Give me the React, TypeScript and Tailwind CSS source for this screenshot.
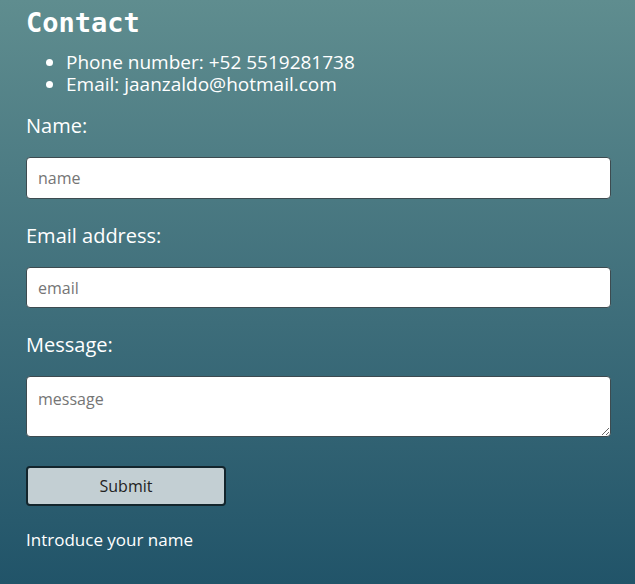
export default function App() {
  return (
    <div
      className="min-h-[584px] w-full bg-gradient-to-b from-[#5f8d8f] to-[#215469] text-white px-[26px] pt-[6px] pb-[30px]"
      style={{ fontFamily: '"Open Sans", "Noto Sans", sans-serif' }}
    >
      <h1
        className="text-[27px] font-bold leading-[34px]"
        style={{ fontFamily: '"DejaVu Sans Mono", "Liberation Mono", monospace' }}
      >
        Contact
      </h1>

      <ul className="list-disc pl-[40px] text-[19px] leading-[22px] mt-[11px]">
        <li>Phone number: +52 5519281738</li>
        <li>Email: jaanzaldo@hotmail.com</li>
      </ul>

      <form className="flex flex-col mt-[18px]" onSubmit={(e) => e.preventDefault()}>
        <label className="text-[20px] leading-[26px]">Name:</label>
        <input
          className="mt-[18px] h-[42px] w-[585px] rounded-[4px] border border-[#3d4b50] bg-white px-[11px] text-[16px] text-black placeholder:text-[#757575]"
          placeholder="name"
        />

        <label className="mt-[24px] text-[20px] leading-[26px]">Email address:</label>
        <input
          className="mt-[18px] h-[41px] w-[585px] rounded-[4px] border border-[#3d4b50] bg-white px-[11px] text-[16px] text-black placeholder:text-[#757575]"
          placeholder="email"
        />

        <label className="mt-[24px] text-[20px] leading-[26px]">Message:</label>
        <textarea
          className="mt-[18px] h-[61px] w-[585px] rounded-[4px] border border-[#3d4b50] bg-white px-[11px] py-[10px] text-[16px] text-black placeholder:text-[#757575]"
          placeholder="message"
        />

        <button
          type="submit"
          className="mt-[29px] h-[40px] w-[200px] rounded-[4px] border-2 border-[#13252c] bg-[#c3cfd3] text-[16px] text-[#222]"
        >
          Submit
        </button>
      </form>

      <p className="mt-[22px] text-[17px] leading-[24px]">Introduce your name</p>
    </div>
  );
}
